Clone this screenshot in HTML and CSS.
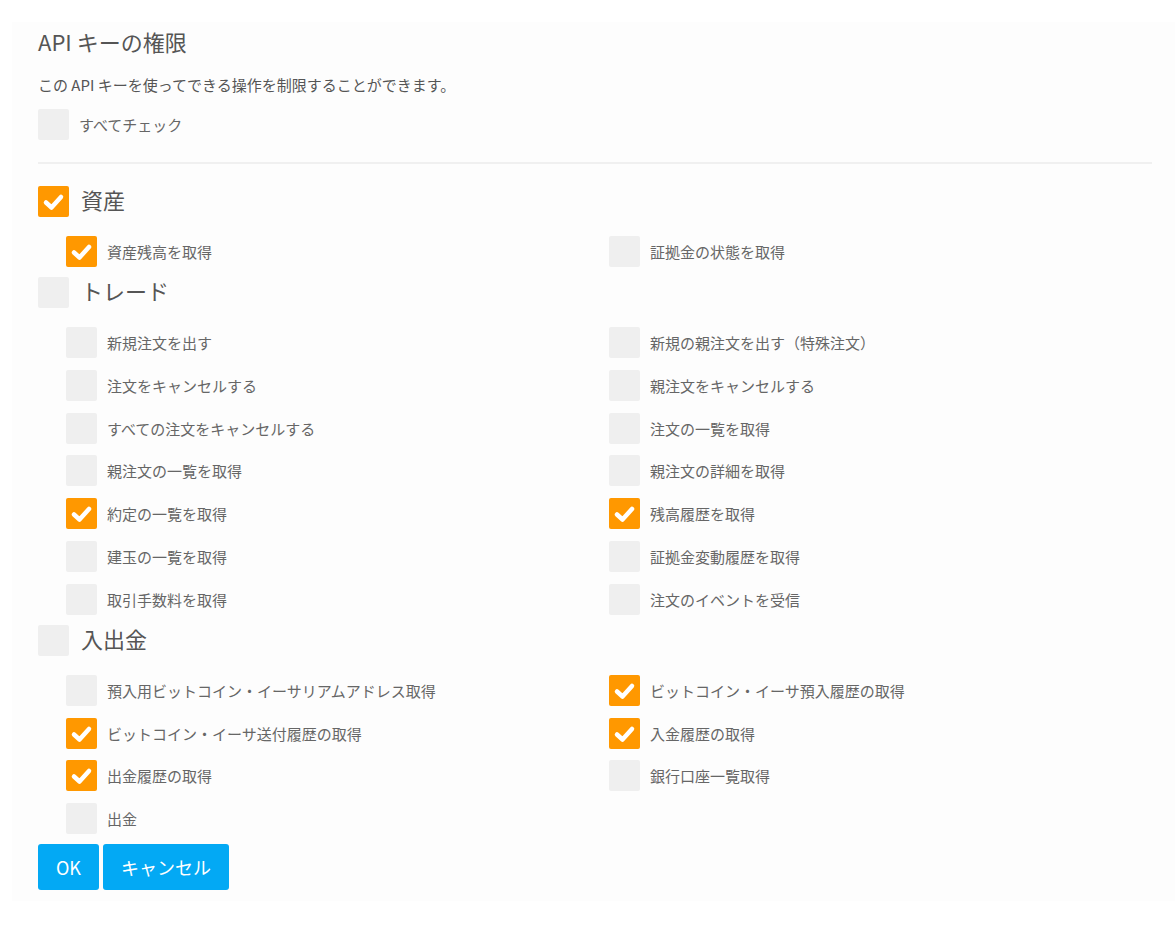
FILE: index.html
```html
<!DOCTYPE html>
<html lang="ja">
<head>
  <meta charset="UTF-8" />
  <title>API キーの権限</title>
  <link rel="stylesheet" href="styles.css">
</head>
<body>

  <div class="panel">
    <h2 class="title">API キーの権限</h2>
    <p class="desc">この API キーを使ってできる操作を制限することができます。</p>

    <div class="check-row all">
      <span class="box"></span>
      <span class="label">すべてチェック</span>
    </div>

    <hr class="divider">

    <!-- 資産 -->
    <div class="group">
      <div class="check-row head">
        <span class="box on"><svg viewBox="0 0 31 31"><polyline points="8,16.5 13.5,21.5 23,11"/></svg></span>
        <span class="label">資産</span>
      </div>
      <div class="items">
        <div class="check-row">
          <span class="box on"><svg viewBox="0 0 31 31"><polyline points="8,16.5 13.5,21.5 23,11"/></svg></span>
          <span class="label">資産残高を取得</span>
        </div>
        <div class="check-row">
          <span class="box"></span>
          <span class="label">証拠金の状態を取得</span>
        </div>
      </div>
    </div>

    <!-- トレード -->
    <div class="group">
      <div class="check-row head">
        <span class="box"></span>
        <span class="label">トレード</span>
      </div>
      <div class="items">
        <div class="check-row"><span class="box"></span><span class="label">新規注文を出す</span></div>
        <div class="check-row"><span class="box"></span><span class="label">新規の親注文を出す（特殊注文）</span></div>
        <div class="check-row"><span class="box"></span><span class="label">注文をキャンセルする</span></div>
        <div class="check-row"><span class="box"></span><span class="label">親注文をキャンセルする</span></div>
        <div class="check-row"><span class="box"></span><span class="label">すべての注文をキャンセルする</span></div>
        <div class="check-row"><span class="box"></span><span class="label">注文の一覧を取得</span></div>
        <div class="check-row"><span class="box"></span><span class="label">親注文の一覧を取得</span></div>
        <div class="check-row"><span class="box"></span><span class="label">親注文の詳細を取得</span></div>
        <div class="check-row">
          <span class="box on"><svg viewBox="0 0 31 31"><polyline points="8,16.5 13.5,21.5 23,11"/></svg></span>
          <span class="label">約定の一覧を取得</span>
        </div>
        <div class="check-row">
          <span class="box on"><svg viewBox="0 0 31 31"><polyline points="8,16.5 13.5,21.5 23,11"/></svg></span>
          <span class="label">残高履歴を取得</span>
        </div>
        <div class="check-row"><span class="box"></span><span class="label">建玉の一覧を取得</span></div>
        <div class="check-row"><span class="box"></span><span class="label">証拠金変動履歴を取得</span></div>
        <div class="check-row"><span class="box"></span><span class="label">取引手数料を取得</span></div>
        <div class="check-row"><span class="box"></span><span class="label">注文のイベントを受信</span></div>
      </div>
    </div>

    <!-- 入出金 -->
    <div class="group">
      <div class="check-row head">
        <span class="box"></span>
        <span class="label">入出金</span>
      </div>
      <div class="items">
        <div class="check-row"><span class="box"></span><span class="label">預入用ビットコイン・イーサリアムアドレス取得</span></div>
        <div class="check-row">
          <span class="box on"><svg viewBox="0 0 31 31"><polyline points="8,16.5 13.5,21.5 23,11"/></svg></span>
          <span class="label">ビットコイン・イーサ預入履歴の取得</span>
        </div>
        <div class="check-row">
          <span class="box on"><svg viewBox="0 0 31 31"><polyline points="8,16.5 13.5,21.5 23,11"/></svg></span>
          <span class="label">ビットコイン・イーサ送付履歴の取得</span>
        </div>
        <div class="check-row">
          <span class="box on"><svg viewBox="0 0 31 31"><polyline points="8,16.5 13.5,21.5 23,11"/></svg></span>
          <span class="label">入金履歴の取得</span>
        </div>
        <div class="check-row">
          <span class="box on"><svg viewBox="0 0 31 31"><polyline points="8,16.5 13.5,21.5 23,11"/></svg></span>
          <span class="label">出金履歴の取得</span>
        </div>
        <div class="check-row"><span class="box"></span><span class="label">銀行口座一覧取得</span></div>
        <div class="check-row"><span class="box"></span><span class="label">出金</span></div>
      </div>
    </div>

    <div class="actions">
      <button class="btn">OK</button>
      <button class="btn">キャンセル</button>
    </div>
  </div>

</body>
</html>
```

FILE: styles.css
```css
body {
  margin: 0;
  background-color: #ffffff;
  color: #666666;
  font-family: "Noto Sans CJK JP", "Noto Sans", sans-serif;
}

.panel {
  margin: 22px 0 0 12px;
  padding: 4px 23px 11px 26px;
  background-color: #fdfdfd;
}

.title {
  margin: 0 0 18px;
  font-size: 22px;
  line-height: 30px;
  font-weight: normal;
  color: #555555;
}

.desc {
  margin: 0 0 13px;
  font-size: 15px;
  line-height: 22px;
  color: #555555;
}

.check-row {
  display: flex;
  align-items: center;
  height: 31px;
}

.box {
  flex: 0 0 31px;
  width: 31px;
  height: 31px;
  border-radius: 2px;
  background-color: #efefef;
}

.box.on {
  background-color: #ff9800;
}

.box svg {
  display: block;
  width: 31px;
  height: 31px;
}

.box polyline {
  fill: none;
  stroke: #ffffff;
  stroke-width: 4.5;
  stroke-linecap: round;
  stroke-linejoin: round;
}

.label {
  margin-left: 10px;
  font-size: 15px;
  color: #666666;
}

.divider {
  margin: 22px 0;
  border: none;
  height: 2px;
  background-color: #f0f0f0;
}

.group {
  margin-bottom: 10px;
}

.head {
  margin-bottom: 19px;
}

.head .label {
  margin-top: -5px;
  margin-left: 12px;
  font-size: 22px;
  color: #555555;
}

.items {
  display: grid;
  grid-template-columns: 1fr 1fr;
  row-gap: 11.8px;
  margin-left: 28px;
}

.actions {
  display: flex;
  gap: 4px;
  margin-top: 2px;
}

.btn {
  height: 46px;
  padding: 0 18px;
  border: none;
  border-radius: 3px;
  background-color: #03a9f4;
  color: #ffffff;
  font-family: "Noto Sans CJK JP", "Noto Sans", sans-serif;
  font-size: 18px;
  cursor: pointer;
}
```
